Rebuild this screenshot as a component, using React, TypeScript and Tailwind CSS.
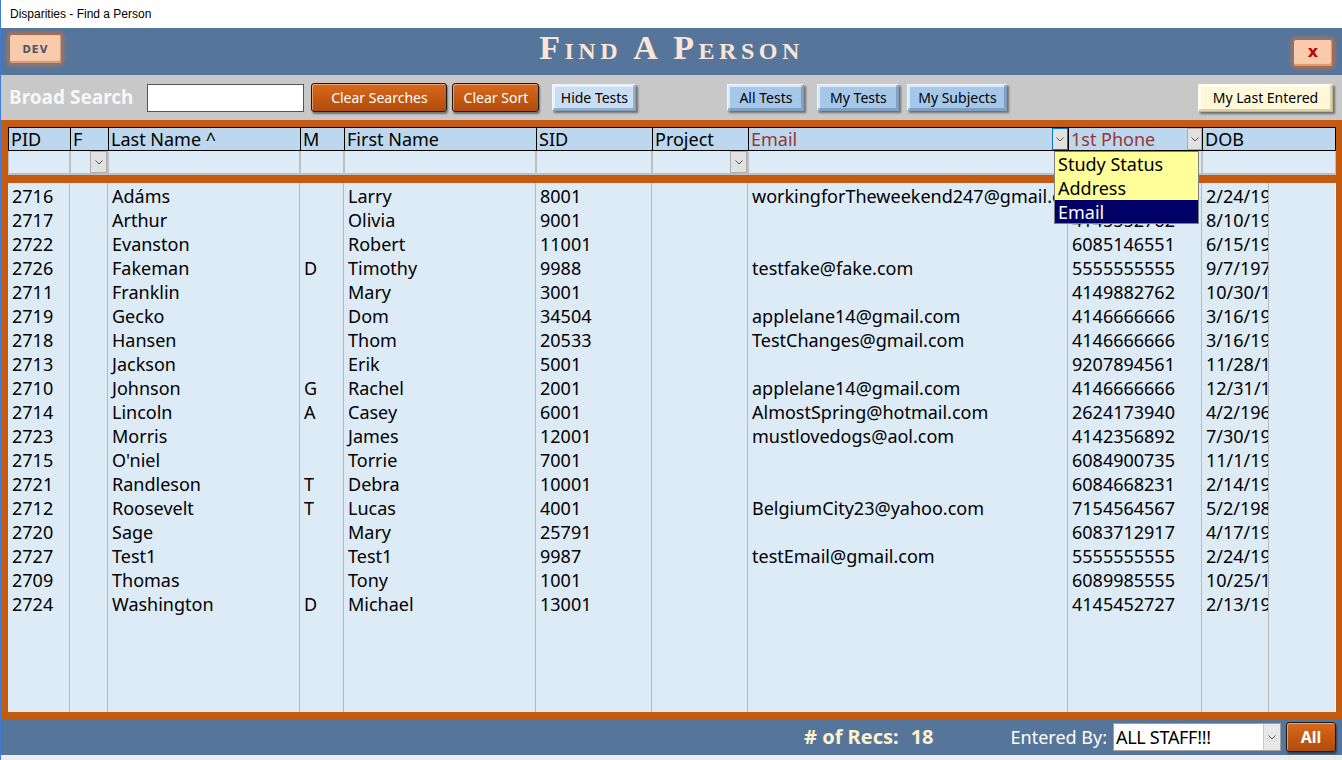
import React from "react";

type Row = [string, string, string, string, string, string, string, string, string, string];

const rows: Row[] = [
  ["2716", "", "Adáms", "", "Larry", "8001", "", "workingforTheweekend247@gmail.com", "4145552762", "2/24/1990"],
  ["2717", "", "Arthur", "", "Olivia", "9001", "", "", "4145552762", "8/10/1985"],
  ["2722", "", "Evanston", "", "Robert", "11001", "", "", "6085146551", "6/15/1977"],
  ["2726", "", "Fakeman", "D", "Timothy", "9988", "", "testfake@fake.com", "5555555555", "9/7/1970"],
  ["2711", "", "Franklin", "", "Mary", "3001", "", "", "4149882762", "10/30/1962"],
  ["2719", "", "Gecko", "", "Dom", "34504", "", "applelane14@gmail.com", "4146666666", "3/16/1994"],
  ["2718", "", "Hansen", "", "Thom", "20533", "", "TestChanges@gmail.com", "4146666666", "3/16/1994"],
  ["2713", "", "Jackson", "", "Erik", "5001", "", "", "9207894561", "11/28/1980"],
  ["2710", "", "Johnson", "G", "Rachel", "2001", "", "applelane14@gmail.com", "4146666666", "12/31/1975"],
  ["2714", "", "Lincoln", "A", "Casey", "6001", "", "AlmostSpring@hotmail.com", "2624173940", "4/2/1965"],
  ["2723", "", "Morris", "", "James", "12001", "", "mustlovedogs@aol.com", "4142356892", "7/30/1988"],
  ["2715", "", "O'niel", "", "Torrie", "7001", "", "", "6084900735", "11/1/1992"],
  ["2721", "", "Randleson", "T", "Debra", "10001", "", "", "6084668231", "2/14/1979"],
  ["2712", "", "Roosevelt", "T", "Lucas", "4001", "", "BelgiumCity23@yahoo.com", "7154564567", "5/2/1983"],
  ["2720", "", "Sage", "", "Mary", "25791", "", "", "6083712917", "4/17/1991"],
  ["2727", "", "Test1", "", "Test1", "9987", "", "testEmail@gmail.com", "5555555555", "2/24/1990"],
  ["2709", "", "Thomas", "", "Tony", "1001", "", "", "6089985555", "10/25/1968"],
  ["2724", "", "Washington", "D", "Michael", "13001", "", "", "4145452727", "2/13/1972"],
];

const headers = ["PID", "F", "Last Name ^", "M", "First Name", "SID", "Project", "Email", "1st Phone", "DOB"];

function Chevron({ color = "#555" }: { color?: string }) {
  return (
    <svg width="8" height="5" viewBox="0 0 8 5">
      <polyline points="0.5,0.5 4,4 7.5,0.5" fill="none" stroke={color} strokeWidth="1" />
    </svg>
  );
}

function OrangeBtn({ label, w }: { label: string; w: string }) {
  return (
    <div
      className={`${w} h-[29px] rounded-[3px] border-[1.5px] border-[#1a1a1a] bg-gradient-to-b from-[#d86a22] via-[#c55a11] to-[#b04d0c] shadow-[1px_2px_2px_rgba(0,0,0,0.45),inset_1px_1px_0_rgba(255,200,160,0.6)] flex items-center justify-center text-white text-[14px] leading-none`}
    >
      {label}
    </div>
  );
}

function BlueBtn({ label, w, light }: { label: string; w: string; light?: boolean }) {
  return (
    <div
      className={`${w} h-[27px] ${
        light ? "bg-[#c9def3]" : "bg-[#a5c8ea]"
      } border border-[#7f9fbf] border-t-[#eef5fc] border-l-[#eef5fc] shadow-[2px_2px_2px_rgba(0,0,0,0.45),inset_-2px_-2px_0_rgba(60,90,130,0.35),inset_2px_2px_0_rgba(255,255,255,0.6)] flex items-center justify-center text-black text-[14px] leading-none`}
    >
      {label}
    </div>
  );
}

export default function App() {
  return (
    <div className="w-[1342px] h-[760px] overflow-hidden bg-white flex flex-col relative border-l border-[#3b7dd8] font-['Noto_Sans',sans-serif]">
      {/* Title bar */}
      <div className="h-[28px] shrink-0 bg-white flex items-center pl-[9px] text-[12px] text-black font-['Liberation_Sans',sans-serif]">
        Disparities - Find a Person
      </div>

      {/* Header band */}
      <div className="h-[47px] shrink-0 bg-[#56759b] grid grid-cols-[1fr_auto_1fr] items-start">
        <div className="pl-[8px] pt-[6px]">
          <div className="w-[53px] h-[30px] rounded-[3px] bg-[#f8cbad] border border-[#b5683a] shadow-[0_0_4px_2px_rgba(214,120,60,0.55),inset_-1px_-2px_1px_rgba(140,70,30,0.35)] flex items-center justify-center text-[10px] font-bold tracking-[1px] text-[#4a5568] font-['DejaVu_Sans',sans-serif]">
            DEV
          </div>
        </div>
        <div className="pt-[1px] text-[34px] leading-[38px] text-[#fbe5d6] font-bold tracking-[4.5px] [font-variant-caps:small-caps] font-['Liberation_Serif',serif]">
          Find A Person
        </div>
        <div className="flex justify-end pr-[9px] pt-[11px]">
          <div className="w-[40px] h-[28px] rounded-[3px] bg-[#f8cbad] border border-[#b5683a] shadow-[0_0_4px_2px_rgba(214,120,60,0.55),inset_-1px_-2px_1px_rgba(140,70,30,0.35)] flex items-center justify-center text-[16px] font-bold text-[#c00000] font-['DejaVu_Sans',sans-serif] leading-none pb-[3px]">
            x
          </div>
        </div>
      </div>

      {/* Search band */}
      <div className="h-[45px] shrink-0 bg-[#c8c8c8] flex items-center">
        <div className="ml-[8px] text-[19px] font-bold text-[#f7f7f7] leading-none">Broad Search</div>
        <div className="ml-[14px] w-[157px] h-[28px] bg-white border border-[#555]" />
        <div className="ml-[7px]">
          <OrangeBtn label="Clear Searches" w="w-[136px]" />
        </div>
        <div className="ml-[5px]">
          <OrangeBtn label="Clear Sort" w="w-[87px]" />
        </div>
        <div className="ml-[13px]">
          <BlueBtn label="Hide Tests" w="w-[84px]" light />
        </div>
        <div className="ml-[91px]">
          <BlueBtn label="All Tests" w="w-[77px]" />
        </div>
        <div className="ml-[13px]">
          <BlueBtn label="My Tests" w="w-[82px]" />
        </div>
        <div className="ml-[8px]">
          <BlueBtn label="My Subjects" w="w-[100px]" />
        </div>
        <div className="ml-auto mr-[9px]">
          <div className="w-[135px] h-[28px] bg-[#fff8d8] border border-[#bfb78f] border-t-[#fffdf0] border-l-[#fffdf0] shadow-[2px_2px_2px_rgba(0,0,0,0.45),inset_-2px_-2px_0_rgba(150,140,90,0.35),inset_2px_2px_0_rgba(255,255,255,0.7)] flex items-center justify-center text-black text-[14px] leading-none">
            My Last Entered
          </div>
        </div>
      </div>

      {/* Orange frame with table */}
      <div className="flex-1 min-h-0 bg-[#c55a11] flex flex-col pl-[7px] pr-[6px] pt-[7px] pb-[7px] relative">
        {/* header row */}
        <div className="h-[24px] shrink-0 grid grid-cols-[62px_38px_192px_44px_192px_116px_96px_320px_134px_134px] bg-[#bdd7ee] border border-black text-[18px] leading-[22px]">
          {headers.map((h, i) => (
            <div
              key={h}
              className={`relative border-r border-black pl-[2px] whitespace-nowrap overflow-hidden ${
                i === 7 || i === 8 ? "text-[#953735]" : "text-black"
              } ${i === 9 ? "border-r-0" : ""}`}
            >
              {h}
              {i === 7 && (
                <div className="absolute right-0 top-0 w-[16px] h-[22px] bg-[#e1e1e1] border border-[#0078d7] flex items-center justify-center">
                  <Chevron />
                </div>
              )}
              {i === 8 && (
                <div className="absolute right-0 top-0 w-[15px] h-[22px] bg-[#e1e1e1] border border-[#adadad] flex items-center justify-center">
                  <Chevron />
                </div>
              )}
            </div>
          ))}
        </div>
        {/* filter row */}
        <div className="h-[24px] shrink-0 grid grid-cols-[62px_38px_192px_44px_192px_116px_96px_320px_134px_134px] bg-[#ddebf7] border-b-2 border-[#bfbfbf] border-l border-l-[#bfbfbf] border-r border-r-[#bfbfbf]">
          {headers.map((h, i) => (
            <div key={h} className={`relative ${i === 9 ? "" : "border-r-2 border-[#bfbfbf]"}`}>
              {(i === 1 || i === 6) && (
                <div className="absolute right-0 top-0 w-[17px] h-[22px] bg-[#e1e1e1] border border-[#adadad] flex items-center justify-center">
                  <Chevron />
                </div>
              )}
            </div>
          ))}
        </div>
        {/* gap */}
        <div className="h-[8px] shrink-0" />
        {/* data area */}
        <div className="flex-1 min-h-0 bg-[#ddebf7] border-r border-[#f4f8fc] grid grid-cols-[62px_38px_192px_44px_192px_116px_96px_320px_134px_67px_1fr] text-[18px] leading-[24px] text-black">
          {Array.from({ length: 10 }).map((_, c) => (
            <div key={c} className="border-r border-[#b8b8b8] pt-[1px] overflow-hidden">
              {rows.map((r, ri) => (
                <div key={ri} className="h-[24px] pl-[4px] whitespace-nowrap overflow-hidden">
                  {r[c]}
                </div>
              ))}
            </div>
          ))}
          <div />
        </div>

        {/* dropdown list overlay */}
        <div className="absolute left-[1053px] top-[31px] w-[145px] h-[73px] bg-[#ffff99] border border-[#7f7f7f] text-[18px] leading-[24px] flex flex-col">
          <div className="h-[24px] pl-[3px] text-black">Study Status</div>
          <div className="h-[24px] pl-[3px] text-black">Address</div>
          <div className="h-[23px] pl-[3px] bg-[#000066] text-white">Email</div>
        </div>
      </div>

      {/* Footer */}
      <div className="h-[36px] shrink-0 bg-[#56759b] flex items-center justify-end pr-[6px]">
        <div className="text-[20px] font-bold text-[#fff2cc] leading-none">
          # of Recs:<span className="ml-[12px]">18</span>
        </div>
        <div className="ml-[77px] text-[18px] text-white leading-none">Entered By:</div>
        <div className="ml-[6px] w-[168px] h-[28px] bg-white border border-[#a0a0a0] flex items-center relative">
          <span className="pl-[2px] text-[18px] leading-none text-black tracking-[-0.3px]">ALL STAFF!!!</span>
          <div className="absolute right-0 top-0 w-[17px] h-[26px] bg-[#e8e8e8] border-l border-[#c8c8c8] flex items-center justify-center">
            <Chevron />
          </div>
        </div>
        <div className="ml-[5px] w-[50px] h-[30px] rounded-[3px] border-[1.5px] border-[#1a1a1a] bg-gradient-to-b from-[#d86a22] via-[#c55a11] to-[#b04d0c] shadow-[1px_2px_2px_rgba(0,0,0,0.45),inset_1px_1px_0_rgba(255,200,160,0.6)] flex items-center justify-center text-white text-[16px] font-bold leading-none">
          All
        </div>
      </div>
      <div className="h-[5px] shrink-0 bg-[#ececec]" />
    </div>
  );
}
